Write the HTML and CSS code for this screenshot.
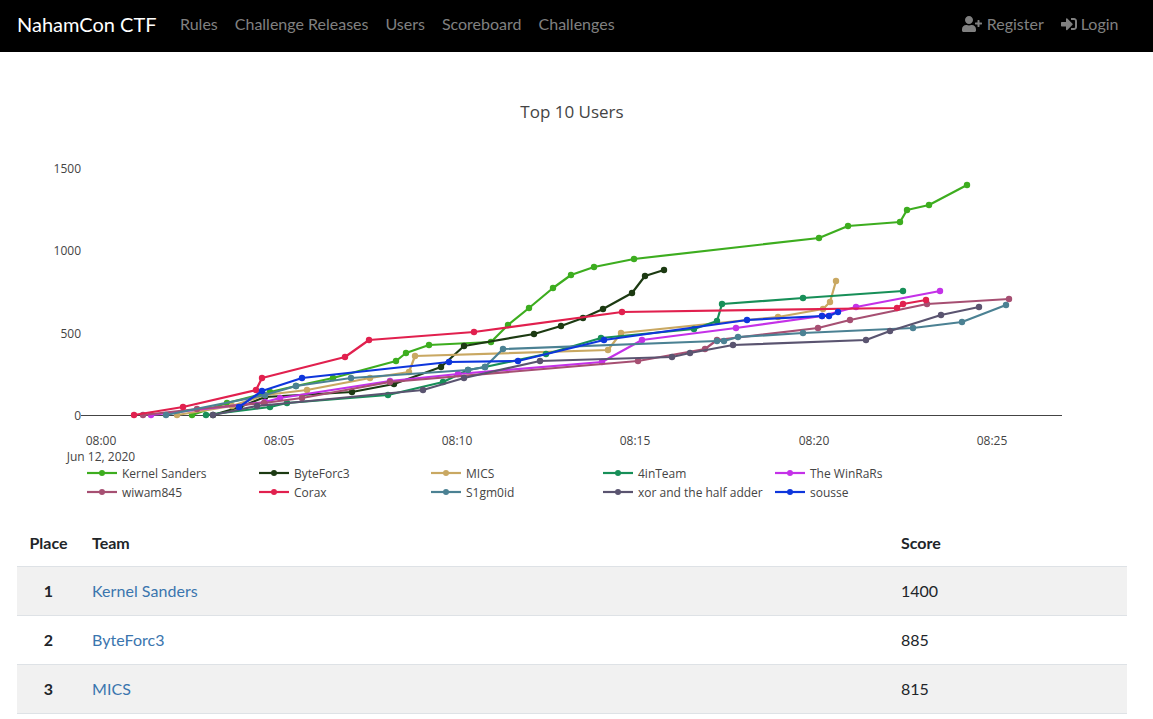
FILE: index.html
```html
<!DOCTYPE html>
<html lang="en">
<head>
<meta charset="utf-8">
<title>Scoreboard | NahamCon CTF</title>
<link rel="stylesheet" href="styles.css">
</head>
<body>
<nav class="navbar">
  <a class="brand" href="#">NahamCon CTF</a>
  <ul class="nav-links">
    <li><a href="#">Rules</a></li>
    <li><a href="#">Challenge Releases</a></li>
    <li><a href="#">Users</a></li>
    <li><a href="#">Scoreboard</a></li>
    <li><a href="#">Challenges</a></li>
  </ul>
  <ul class="nav-links nav-right">
    <li><a href="#"><svg class="icon icon-wide" viewBox="0 0 640 512"><path d="M624 208h-64v-64c0-8.800-7.200-16-16-16h-32c-8.800 0-16 7.200-16 16v64h-64c-8.800 0-16 7.200-16 16v32c0 8.800 7.200 16 16 16h64v64c0 8.800 7.200 16 16 16h32c8.800 0 16-7.200 16-16v-64h64c8.800 0 16-7.200 16-16v-32c0-8.800-7.200-16-16-16zm-400 48c70.700 0 128-57.300 128-128S294.700 0 224 0 96 57.300 96 128s57.300 128 128 128zm89.600 32h-16.700c-22.200 10.200-46.900 16-72.900 16s-50.600-5.800-72.900-16h-16.700C60.200 288 0 348.200 0 422.400V464c0 26.500 21.500 48 48 48h352c26.500 0 48-21.500 48-48v-41.600c0-74.200-60.200-134.400-134.400-134.400z"/></svg>Register</a></li>
    <li><a href="#"><svg class="icon" viewBox="0 0 512 512"><path d="M416 448h-84c-6.600 0-12-5.400-12-12v-40c0-6.600 5.400-12 12-12h84c17.700 0 32-14.300 32-32V160c0-17.700-14.300-32-32-32h-84c-6.600 0-12-5.400-12-12V76c0-6.600 5.400-12 12-12h84c53 0 96 43 96 96v192c0 53-43 96-96 96zm-47-201L201 79c-15-15-41-4.500-41 17v96H24c-13.300 0-24 10.700-24 24v96c0 13.300 10.700 24 24 24h136v96c0 21.500 26 32 41 17l168-168c9.300-9.400 9.300-24.600 0-34z"/></svg>Login</a></li>
  </ul>
</nav>

<svg class="chart" viewBox="0 52 1153 460" role="img" aria-label="Top 10 Users">
  <defs>
    <marker id="m1" markerUnits="userSpaceOnUse" markerWidth="8" markerHeight="8" refX="4" refY="4"><circle cx="4" cy="4" r="3.200" fill="#3dad1f"/></marker>
    <marker id="m2" markerUnits="userSpaceOnUse" markerWidth="8" markerHeight="8" refX="4" refY="4"><circle cx="4" cy="4" r="3.200" fill="#1c3a12"/></marker>
    <marker id="m3" markerUnits="userSpaceOnUse" markerWidth="8" markerHeight="8" refX="4" refY="4"><circle cx="4" cy="4" r="3.200" fill="#c9a862"/></marker>
    <marker id="m4" markerUnits="userSpaceOnUse" markerWidth="8" markerHeight="8" refX="4" refY="4"><circle cx="4" cy="4" r="3.200" fill="#178f58"/></marker>
    <marker id="m5" markerUnits="userSpaceOnUse" markerWidth="8" markerHeight="8" refX="4" refY="4"><circle cx="4" cy="4" r="3.200" fill="#c431e8"/></marker>
    <marker id="m6" markerUnits="userSpaceOnUse" markerWidth="8" markerHeight="8" refX="4" refY="4"><circle cx="4" cy="4" r="3.200" fill="#a64f72"/></marker>
    <marker id="m7" markerUnits="userSpaceOnUse" markerWidth="8" markerHeight="8" refX="4" refY="4"><circle cx="4" cy="4" r="3.200" fill="#e1204e"/></marker>
    <marker id="m8" markerUnits="userSpaceOnUse" markerWidth="8" markerHeight="8" refX="4" refY="4"><circle cx="4" cy="4" r="3.200" fill="#4b8193"/></marker>
    <marker id="m9" markerUnits="userSpaceOnUse" markerWidth="8" markerHeight="8" refX="4" refY="4"><circle cx="4" cy="4" r="3.200" fill="#5a5470"/></marker>
    <marker id="m10" markerUnits="userSpaceOnUse" markerWidth="8" markerHeight="8" refX="4" refY="4"><circle cx="4" cy="4" r="3.200" fill="#0e36dc"/></marker>
  </defs>

  <text class="title" x="572" y="118">Top 10 Users</text>

  <text class="tick end" x="81" y="173">1500</text>
  <text class="tick end" x="81" y="255">1000</text>
  <text class="tick end" x="81" y="338">500</text>
  <text class="tick end" x="81" y="420">0</text>

  <line class="axis" x1="81" y1="415.500" x2="1062" y2="415.500"/>

  <text class="tick mid" x="101" y="445">08:00</text>
  <text class="tick mid" x="101" y="461">Jun 12, 2020</text>
  <text class="tick mid" x="279" y="445">08:05</text>
  <text class="tick mid" x="457" y="445">08:10</text>
  <text class="tick mid" x="635" y="445">08:15</text>
  <text class="tick mid" x="814" y="445">08:20</text>
  <text class="tick mid" x="992" y="445">08:25</text>

  <polyline class="s s1" marker-start="url(#m1)" marker-mid="url(#m1)" marker-end="url(#m1)" points="192,415 227,403 270,392 296,386 333,378 396,361 406,353 429,345 491,342 508,325 529,308 553,288 571,275 594,267 634,259 819,238 848,226 900,222 907,210 929,205 967,185"/>
  <polyline class="s s2" marker-start="url(#m2)" marker-mid="url(#m2)" marker-end="url(#m2)" points="213,415 240,407 265,397 352,392 394,384 441,367 464,346 534,334 561,326 583,318 603,309 632,293 645,276 664,270"/>
  <polyline class="s s3" marker-start="url(#m3)" marker-mid="url(#m3)" marker-end="url(#m3)" points="177,415 232,406 265,395 307,390 370,378 409,372 415,356 608,350 621,333 778,317 823,309 830,302 836,281"/>
  <polyline class="s s4" marker-start="url(#m4)" marker-mid="url(#m4)" marker-end="url(#m4)" points="206,415 270,407 287,403 388,395 443,382 468,370 485,367 546,354 601,338 694,329 717,321 722,304 803,298 903,291"/>
  <polyline class="s s5" marker-start="url(#m5)" marker-mid="url(#m5)" marker-end="url(#m5)" points="151,415 265,402 280,398 390,381 458,374 602,362 642,340 736,328 822,316 856,307 940,291"/>
  <polyline class="s s6" marker-start="url(#m6)" marker-mid="url(#m6)" marker-end="url(#m6)" points="143,415 197,409 264,403 302,398 390,382 638,361 705,349 717,340 818,328 850,320 927,304 1009,299"/>
  <polyline class="s s7" marker-start="url(#m7)" marker-mid="url(#m7)" marker-end="url(#m7)" points="134,415 183,407 256,390 262,378 345,357 369,340 474,332 622,312 897,308 903,304 926,300"/>
  <polyline class="s s8" marker-start="url(#m8)" marker-mid="url(#m8)" marker-end="url(#m8)" points="166,415 265,395 296,386 351,378 468,370 485,367 503,349 717,341 724,341 738,337 803,333 913,328 962,322 1006,305"/>
  <polyline class="s s9" marker-start="url(#m9)" marker-mid="url(#m9)" marker-end="url(#m9)" points="213,415 257,406 423,390 464,378 540,361 672,357 690,353 733,345 866,340 890,331 941,315 979,307"/>
  <polyline class="s s10" marker-start="url(#m10)" marker-mid="url(#m10)" marker-end="url(#m10)" points="239,407 262,391 302,378 449,362 518,361 604,340 747,320 822,316 829,316 838,312"/>

  <g class="legend">
    <line class="s s1" x1="87" y1="473" x2="117" y2="473"/>
    <text x="122" y="478">Kernel Sanders</text>
    <line class="s s2" x1="259" y1="473" x2="289" y2="473"/>
    <text x="294" y="478">ByteForc3</text>
    <line class="s s3" x1="431" y1="473" x2="461" y2="473"/>
    <text x="466" y="478">MICS</text>
    <line class="s s4" x1="603" y1="473" x2="633" y2="473"/>
    <text x="638" y="478">4inTeam</text>
    <line class="s s5" x1="775" y1="473" x2="805" y2="473"/>
    <text x="810" y="478">The WinRaRs</text>
    <line class="s s6" x1="87" y1="492" x2="117" y2="492"/>
    <text x="122" y="497">wiwam845</text>
    <line class="s s7" x1="259" y1="492" x2="289" y2="492"/>
    <text x="294" y="497">Corax</text>
    <line class="s s8" x1="431" y1="492" x2="461" y2="492"/>
    <text x="466" y="497">S1gm0id</text>
    <line class="s s9" x1="603" y1="492" x2="633" y2="492"/>
    <text x="638" y="497">xor and the half adder</text>
    <line class="s s10" x1="775" y1="492" x2="805" y2="492"/>
    <text x="810" y="497">sousse</text>
    <circle class="d1" cx="102" cy="473" r="3"/>
    <circle class="d2" cx="274" cy="473" r="3"/>
    <circle class="d3" cx="446" cy="473" r="3"/>
    <circle class="d4" cx="618" cy="473" r="3"/>
    <circle class="d5" cx="790" cy="473" r="3"/>
    <circle class="d6" cx="102" cy="492" r="3"/>
    <circle class="d7" cx="274" cy="492" r="3"/>
    <circle class="d8" cx="446" cy="492" r="3"/>
    <circle class="d9" cx="618" cy="492" r="3"/>
    <circle class="d10" cx="790" cy="492" r="3"/>
  </g>
</svg>

<main class="board">
  <table class="scores">
    <thead>
      <tr><th class="place">Place</th><th>Team</th><th class="score">Score</th></tr>
    </thead>
    <tbody>
      <tr><th class="place">1</th><td><a href="#">Kernel Sanders</a></td><td class="score">1400</td></tr>
      <tr><th class="place">2</th><td><a href="#">ByteForc3</a></td><td class="score">885</td></tr>
      <tr><th class="place">3</th><td><a href="#">MICS</a></td><td class="score">815</td></tr>
    </tbody>
  </table>
</main>
</body>
</html>
```
FILE: styles.css
```css
* { box-sizing: border-box; }
html, body { margin: 0; padding: 0; }
body {
  background: #fff;
  color: #212529;
  font-family: Lato, "Liberation Sans", sans-serif;
  font-size: 16px;
  line-height: 24px;
  overflow: hidden;
}
a { text-decoration: none; }

.navbar {
  display: flex;
  align-items: center;
  height: 52px;
  padding: 0 26px 5px 17px;
  background: #000;
}
.brand {
  color: #fff;
  font-size: 20px;
  margin-right: 15px;
}
.nav-links {
  display: flex;
  list-style: none;
  margin: 0;
  padding: 0;
}
.nav-links a {
  display: flex;
  align-items: center;
  padding: 0 8.500px;
  color: #808080;
}
.nav-right { margin-left: auto; }
.icon { width: 16px; height: 16px; fill: #808080; margin-right: 4px; }
.icon-wide { width: 20px; height: 16px; margin-right: 5px; }

.chart {
  display: block;
  width: 1153px;
  height: 460px;
  font-family: "Open Sans", "Liberation Sans", sans-serif;
}
.title { font-size: 17px; fill: #444; text-anchor: middle; }
.tick { font-size: 12px; fill: #444; }
.end { text-anchor: end; }
.mid { text-anchor: middle; }
.axis { stroke: #444; stroke-width: 1; }
.legend text { font-size: 12px; fill: #444; }

.s { fill: none; stroke-width: 2.200; stroke-linejoin: round; }
.s1 { stroke: #3dad1f; }
.s2 { stroke: #1c3a12; }
.s3 { stroke: #c9a862; }
.s4 { stroke: #178f58; }
.s5 { stroke: #c431e8; }
.s6 { stroke: #a64f72; }
.s7 { stroke: #e1204e; }
.s8 { stroke: #4b8193; }
.s9 { stroke: #5a5470; }
.s10 { stroke: #0e36dc; }
.d1 { fill: #3dad1f; }
.d2 { fill: #1c3a12; }
.d3 { fill: #c9a862; }
.d4 { fill: #178f58; }
.d5 { fill: #c431e8; }
.d6 { fill: #a64f72; }
.d7 { fill: #e1204e; }
.d8 { fill: #4b8193; }
.d9 { fill: #5a5470; }
.d10 { fill: #0e36dc; }

.board { padding: 5px 26px 0 17px; }
.scores {
  width: 1110px;
  border-collapse: collapse;
  table-layout: fixed;
}
.scores th, .scores td {
  height: 49px;
  padding: 12px;
  text-align: left;
  vertical-align: middle;
}
.scores thead th { padding: 14px 12px 10px; }
.scores th { font-weight: 700; }
.scores tbody tr { border-top: 1px solid #dee2e6; }
.scores tbody tr:last-child { border-bottom: 1px solid #dee2e6; }
.scores tbody tr:nth-child(odd) { background: #f1f1f1; }
.scores .place { width: 63px; text-align: center; }
.scores .score { width: 238px; }
.scores a { color: #3a75ae; letter-spacing: 0.050px; }
```
